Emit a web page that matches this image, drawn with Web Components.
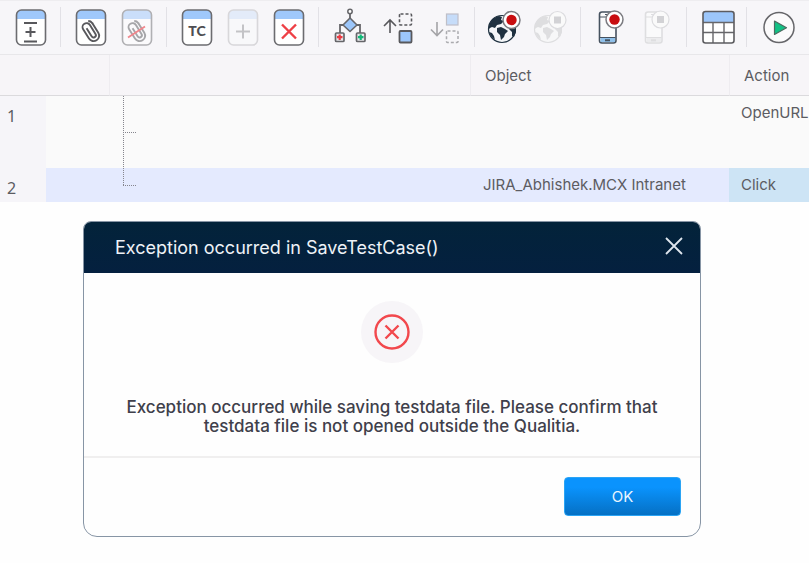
<!DOCTYPE html>
<html lang="en">
<head>
<meta charset="utf-8">
<title>Test case editor</title>
<style>
  body{
    margin:0;
    background:#fefefe;
    font-family:Inter, "Liberation Sans", sans-serif;
    color:#5c5c62;
  }
</style>
</head>
<body>

<test-editor></test-editor>

<script>
// page outline shared by the document icons
const doc = `
  <rect x="5.500" y="3" width="29" height="35" rx="5" fill="#fff"/>
  <path d="M5.500 12V8a5 5 0 0 1 5-5h19a5 5 0 0 1 5 5v4z" fill="#9fc8fb"/>
  <rect x="5.500" y="3" width="29" height="35" rx="5" stroke="#6c6c70" stroke-width="1.600"/>`;

const clip = `
  <g transform="rotate(-32 20 25)" stroke="#58585c" stroke-width="1.900">
    <path d="M25.800 18v11.500a5.500 5.500 0 0 1-11 0V18.500a4 4 0 0 1 8 0V29a2.300 2.300 0 0 1-4.600 0v-9.500"/>
    <path d="M25.800 19v-1a5 5 0 0 0-2.300-3.800"/>
  </g>`;

const globe = (ink, sea) => `
  <circle cx="17" cy="22" r="13.500" fill="${sea}" stroke="${ink}" stroke-width="1.200"/>
  <path fill="${ink}" d="M4 19c1-5 5-9 10-10l3 1-1 3 3 1-3 3-4 1-2 3-3-1-2 1-1 1z
    M4 25l3 1 2 3 1 4c-3-2-5-5-6-8z
    M12 21l4-1 4 2 3 2-3 3-1 3-3 3-1-5-3-3z
    M24 18l3-1 4 4v4l-2 5-2-1v-4l-3-3z
    M19 10l4 0 3 3-4 2z"/>`;

const phone = (ink, base) => `
  <rect x="8.500" y="5" width="16.500" height="31" rx="2.500" fill="#fafafb" stroke="${ink}" stroke-width="1.600"/>
  <path d="M9.500 31h14.500v4h-14.500z" fill="${base}"/>
  <path d="M8.500 10h16M8.500 30.500h16M14 7.500h4" stroke="${ink}" stroke-width="1.200"/>
  <path d="M14 33.300h5" stroke="${ink}" stroke-width="2"/>`;

const record = (x, y) => `
  <circle cx="${x}" cy="${y}" r="8.500" fill="#fff" stroke="#7b7b80" stroke-width="1.500"/>
  <circle cx="${x}" cy="${y}" r="5.200" fill="#c80d10"/>`;

const stop = (x, y) => `
  <circle cx="${x}" cy="${y}" r="8.500" fill="#fafafa" stroke="#dcdcdf" stroke-width="1.200"/>
  <rect x="${x - 3.5}" y="${y - 3.5}" width="7" height="7" fill="#d2d2d5"/>`;

const ICONS = {

  insert: doc + `
    <path d="M13 16h13M13 34.500h13M19.500 20v10M14.500 25h10" stroke="#58585c" stroke-width="2"/>`,

  attach: doc + clip,

  detach: `
    <g opacity=".5">${doc}${clip}</g>
    <path d="M11 30.500l17-11" stroke="#f0868c" stroke-width="1.800"/>`,

  testcase: doc + `
    <text x="20" y="29" text-anchor="middle" font-family="Lato, sans-serif" font-size="14" font-weight="900" fill="#4e4e52">TC</text>`,

  add: `
    <g opacity=".22">${doc}</g>
    <path d="M20 17.500v14M13 24.500h14" stroke="#c3c3c6" stroke-width="2"/>`,

  remove: doc + `
    <path d="M13 17.500l14 14M27 17.500l-14 14" stroke="#ee4046" stroke-width="2.400"/>`,

  tree: `
    <path d="M21 7v5M14 18h-3v8M28 18h3v8" stroke="#66666a" stroke-width="1.800"/>
    <circle cx="21" cy="4.500" r="2.200" fill="#fff" stroke="#66666a" stroke-width="1.500"/>
    <path d="M21 11l7 7-7 6.500-7-6.500z" fill="#9cc6fa" stroke="#66666a" stroke-width="1.600" stroke-linejoin="round"/>
    <rect x="6.500" y="26" width="8.500" height="8.500" rx="1" fill="#e9e9ec" stroke="#66666a" stroke-width="1.700"/>
    <rect x="27.500" y="26" width="8.500" height="8.500" rx="1" fill="#e9e9ec" stroke="#66666a" stroke-width="1.700"/>
    <path d="M8 30.200h5.500M10.700 27.500v5.500" stroke="#ea3b43" stroke-width="2.200"/>
    <path d="M29 30.200h5.500M31.700 27.500v5.500" stroke="#12b878" stroke-width="2.200"/>`,

  up: `
    <path d="M13 26V13M7 19l6-6 6 6" stroke="#58585c" stroke-width="1.600"/>
    <rect x="22.500" y="7" width="12" height="11" rx="1" stroke="#58585c" stroke-width="1.600" stroke-dasharray="3 2"/>
    <rect x="22.500" y="24" width="12" height="11.500" rx="1" fill="#9cc6fa" stroke="#58585c" stroke-width="1.800"/>`,

  down: `
    <g opacity=".6">
      <path d="M12 15v13.500M6 22.500l6 6 6-6" stroke="#6e6e72" stroke-width="1.600"/>
      <rect x="21.500" y="7" width="11.500" height="11" fill="#a6cbf9" stroke="#9b9ba8" stroke-width="1.200"/>
      <rect x="21.500" y="24" width="11.500" height="11.500" rx="1" stroke="#7a7a7e" stroke-width="1.500" stroke-dasharray="3 2"/>
    </g>`,

  web: globe("#1f3140", "#f4f6f8") + record(26.5, 13),

  webStop: globe("#dedee0", "#f7f7f8") + stop(26.5, 13),

  mobile: phone("#46525f", "#8fc0ea") + record(23.5, 12.5),

  mobileStop: phone("#dedee0", "#ececee") + stop(23.5, 12.5),

  table: `
    <rect x="6" y="4.500" width="31" height="31.500" rx="2.500" fill="#fff"/>
    <path d="M6 15.500V7a2.500 2.500 0 0 1 2.500-2.500h26a2.500 2.500 0 0 1 2.500 2.500v8.500z" fill="#9cc6fa"/>
    <path d="M6 15.500h31M6 25.500h31M16 15.500v20.500M27 15.500v20.500" stroke="#66666a" stroke-width="1.400"/>
    <rect x="6" y="4.500" width="31" height="31.500" rx="2.500" stroke="#5c5c60" stroke-width="1.600"/>`,

  run: `
    <circle cx="22" cy="20.500" r="15" fill="#fbfafb" stroke="#66666a" stroke-width="1.500"/>
    <path d="M17.500 14l12 6.700-12 6.700z" fill="#12c184" stroke="#4c6b60" stroke-width="1.200" stroke-linejoin="round"/>`

};


class ToolButton extends HTMLElement {

  constructor(){
    super();

    this.attachShadow({ mode:"open" });
  }

  connectedCallback(){

    this.shadowRoot.innerHTML = `
      <style>

        :host{
          display:block;
        }

        button{
          display:block;
          padding:0;
          border:0;
          background:none;
        }

        svg{
          display:block;
        }

      </style>

      <button type="button" aria-label="${this.getAttribute("label")}">
        <svg width="40" height="40" viewBox="0 0 40 40" fill="none">${ICONS[this.getAttribute("icon")]}</svg>
      </button>
    `;

    this.shadowRoot.querySelector("button").disabled = this.hasAttribute("disabled");

  }

}

customElements.define("tool-button", ToolButton);


class ToolGroup extends HTMLElement {

  constructor(){
    super();

    this.attachShadow({ mode:"open" });

    this.shadowRoot.innerHTML = `
      <style>

        :host{
          display:flex;
          gap:6px;
          padding:0 9px 0 10px;
          border-right:1px solid #e2e1e6;
        }

        :host([wide]){
          gap:8px;
        }

        :host(:last-child){
          border-right:0;
        }

      </style>

      <slot></slot>
    `;
  }

}

customElements.define("tool-group", ToolGroup);


class ToolBar extends HTMLElement {

  constructor(){
    super();

    this.attachShadow({ mode:"open" });

    this.shadowRoot.innerHTML = `
      <style>

        :host{
          display:flex;
          padding:6px 0 7px 1px;
          background:#f7f6f9;
          border-top:1px solid #eeedf0;
          border-bottom:1px solid #e8e7ea;
          overflow:hidden;
        }

      </style>

      <slot></slot>
    `;
  }

}

customElements.define("tool-bar", ToolBar);


class StepGrid extends HTMLElement {

  constructor(){
    super();

    this.attachShadow({ mode:"open" });

    this.shadowRoot.innerHTML = `
      <style>

        :host{
          display:block;
          font-size:15px;
          line-height:18px;
        }

        table{
          width:100%;
          table-layout:fixed;
          border-collapse:separate;
          border-spacing:0;
        }

        .number{ width:46px; }
        .indent{ width:63px; }
        .object{ width:259px; }
        .action{ width:80px; }

        th, td{
          padding:8px 0 8px 13px;
          text-align:left;
          vertical-align:top;
          font-weight:400;
          white-space:nowrap;
        }

        thead th{
          padding:12px 0 10px 14px;
          background:#f7f5f8;
          border-bottom:1px solid #dbdadd;
          border-left:1px solid #eeecf0;
        }

        thead td{
          background:#f7f5f8;
          border-bottom:1px solid #dbdadd;
        }

        tbody th{
          padding:11px 0 5px 7px;
          background:#f6f5f9;
          font-family:"Noto Sans", sans-serif;
          font-size:16px;
        }

        tbody td{
          background:#fafafa;
        }

        tbody td:last-child{
          padding-left:12px;
        }

        .branch{
          padding:0 0 0 77px;
        }

        .branch svg{
          display:block;
        }

        .selected td{
          background:#e4eafe;
        }

        .selected td:last-child{
          background:#cde4f5;
        }

      </style>

      <table>
        <colgroup>
          <col class="number"><col class="indent"><col><col class="object"><col class="action">
        </colgroup>
        <thead>
          <tr>
            <td colspan="2"></td>
            <th></th>
            <th scope="col">Object</th>
            <th scope="col">Action</th>
          </tr>
        </thead>
        <tbody>
          <tr>
            <th scope="row">1</th>
            <td class="branch" colspan="2">
              <svg width="14" height="72" fill="none" stroke="#85858d" stroke-dasharray="1 1">
                <path d="M.5 0V72M0 36.500H14"/>
              </svg>
            </td>
            <td></td>
            <td>OpenURL</td>
          </tr>
          <tr class="selected">
            <th scope="row">2</th>
            <td class="branch" colspan="2">
              <svg width="14" height="18" fill="none" stroke="#85858d" stroke-dasharray="1 1">
                <path d="M.5 0V18M0 17.500H14"/>
              </svg>
            </td>
            <td>JIRA_Abhishek.MCX Intranet</td>
            <td>Click</td>
          </tr>
        </tbody>
      </table>
    `;
  }

}

customElements.define("step-grid", StepGrid);


class ErrorDialog extends HTMLElement {

  constructor(){
    super();

    this.attachShadow({ mode:"open" });

    this.shadowRoot.innerHTML = `
      <style>

        :host{
          display:block;
          margin:19px 108px 24px 83px;
        }

        dialog{
          position:static;
          width:auto;
          margin:0;
          padding:0;
          box-sizing:border-box;
          border:1px solid #8795a5;
          border-radius:8px 8px 14px 14px;
          background:#fefefe;
          color:#3f404b;
          overflow:hidden;
        }

        header{
          display:flex;
          align-items:center;
          justify-content:space-between;
          padding:14px 16px 13px 31px;
          background:linear-gradient(#03233a, #04203f);
          color:#eef2f7;
        }

        h1{
          margin:0;
          font-size:18px;
          line-height:24px;
          font-weight:400;
        }

        button{
          font:inherit;
        }

        .close{
          padding:0 0 4px;
          border:0;
          background:none;
          color:#dfe6ee;
        }

        svg{
          display:block;
        }

        .body{
          display:flex;
          flex-direction:column;
          align-items:center;
          gap:35px;
          padding:28px 40px 20px;
          border-bottom:2px solid #f0efef;
        }

        p{
          margin:0;
          max-width:560px;
          font-size:17px;
          line-height:19px;
          font-weight:500;
          text-align:center;
        }

        footer{
          display:flex;
          justify-content:flex-end;
          padding:19px 19px 20px;
        }

        .ok{
          width:117px;
          height:39px;
          border:1px solid #2ba4f4;
          border-radius:4px;
          background:linear-gradient(#0a93fd 25%, #0570c4);
          color:#eaf5ff;
          font-size:15px;
        }

      </style>

      <dialog open aria-labelledby="title">

        <header>
          <h1 id="title"><slot name="title"></slot></h1>
          <button class="close" type="button" aria-label="Close">
            <svg width="20" height="20" viewBox="0 0 20 20" fill="none" stroke="currentColor" stroke-width="1.800">
              <path d="M2 2l16 16M18 2L2 18"/>
            </svg>
          </button>
        </header>

        <div class="body">
          <svg width="62" height="62" viewBox="0 0 62 62" fill="none" stroke="#f2484d">
            <circle cx="31" cy="31" r="31" fill="#f7f5f8" stroke="none"/>
            <circle cx="31" cy="31" r="16.500" stroke-width="2.400"/>
            <path d="M24.500 24.500l13 13M37.500 24.500l-13 13" stroke-width="2.400"/>
          </svg>
          <p><slot></slot></p>
        </div>

        <footer>
          <button class="ok" type="button">OK</button>
        </footer>

      </dialog>
    `;
  }

  connectedCallback(){

    const dialog = this.shadowRoot.querySelector("dialog");

    this.shadowRoot.querySelectorAll("button").forEach((button) => {
      button.addEventListener("click", () => dialog.close());
    });

  }

}

customElements.define("error-dialog", ErrorDialog);


class TestEditor extends HTMLElement {

  constructor(){
    super();

    this.attachShadow({ mode:"open" });

    this.shadowRoot.innerHTML = `
      <style>

        :host{
          display:block;
        }

      </style>

      <tool-bar>
        <tool-group>
          <tool-button icon="insert" label="Insert step"></tool-button>
        </tool-group>
        <tool-group>
          <tool-button icon="attach" label="Attach"></tool-button>
          <tool-button icon="detach" label="Detach" disabled></tool-button>
        </tool-group>
        <tool-group>
          <tool-button icon="testcase" label="Test case"></tool-button>
          <tool-button icon="add" label="Add" disabled></tool-button>
          <tool-button icon="remove" label="Delete"></tool-button>
        </tool-group>
        <tool-group wide>
          <tool-button icon="tree" label="Conditions"></tool-button>
          <tool-button icon="up" label="Move up"></tool-button>
          <tool-button icon="down" label="Move down" disabled></tool-button>
        </tool-group>
        <tool-group>
          <tool-button icon="web" label="Record web"></tool-button>
          <tool-button icon="webStop" label="Stop web recording" disabled></tool-button>
        </tool-group>
        <tool-group>
          <tool-button icon="mobile" label="Record mobile"></tool-button>
          <tool-button icon="mobileStop" label="Stop mobile recording" disabled></tool-button>
        </tool-group>
        <tool-group>
          <tool-button icon="table" label="Test data"></tool-button>
        </tool-group>
        <tool-group>
          <tool-button icon="run" label="Run"></tool-button>
        </tool-group>
      </tool-bar>

      <step-grid></step-grid>

      <error-dialog>
        <span slot="title">Exception occurred in SaveTestCase()</span>
        Exception occurred while saving testdata file. Please confirm that testdata file is not opened outside the Qualitia.
      </error-dialog>
    `;
  }

}

customElements.define("test-editor", TestEditor);
</script>

</body>
</html>
